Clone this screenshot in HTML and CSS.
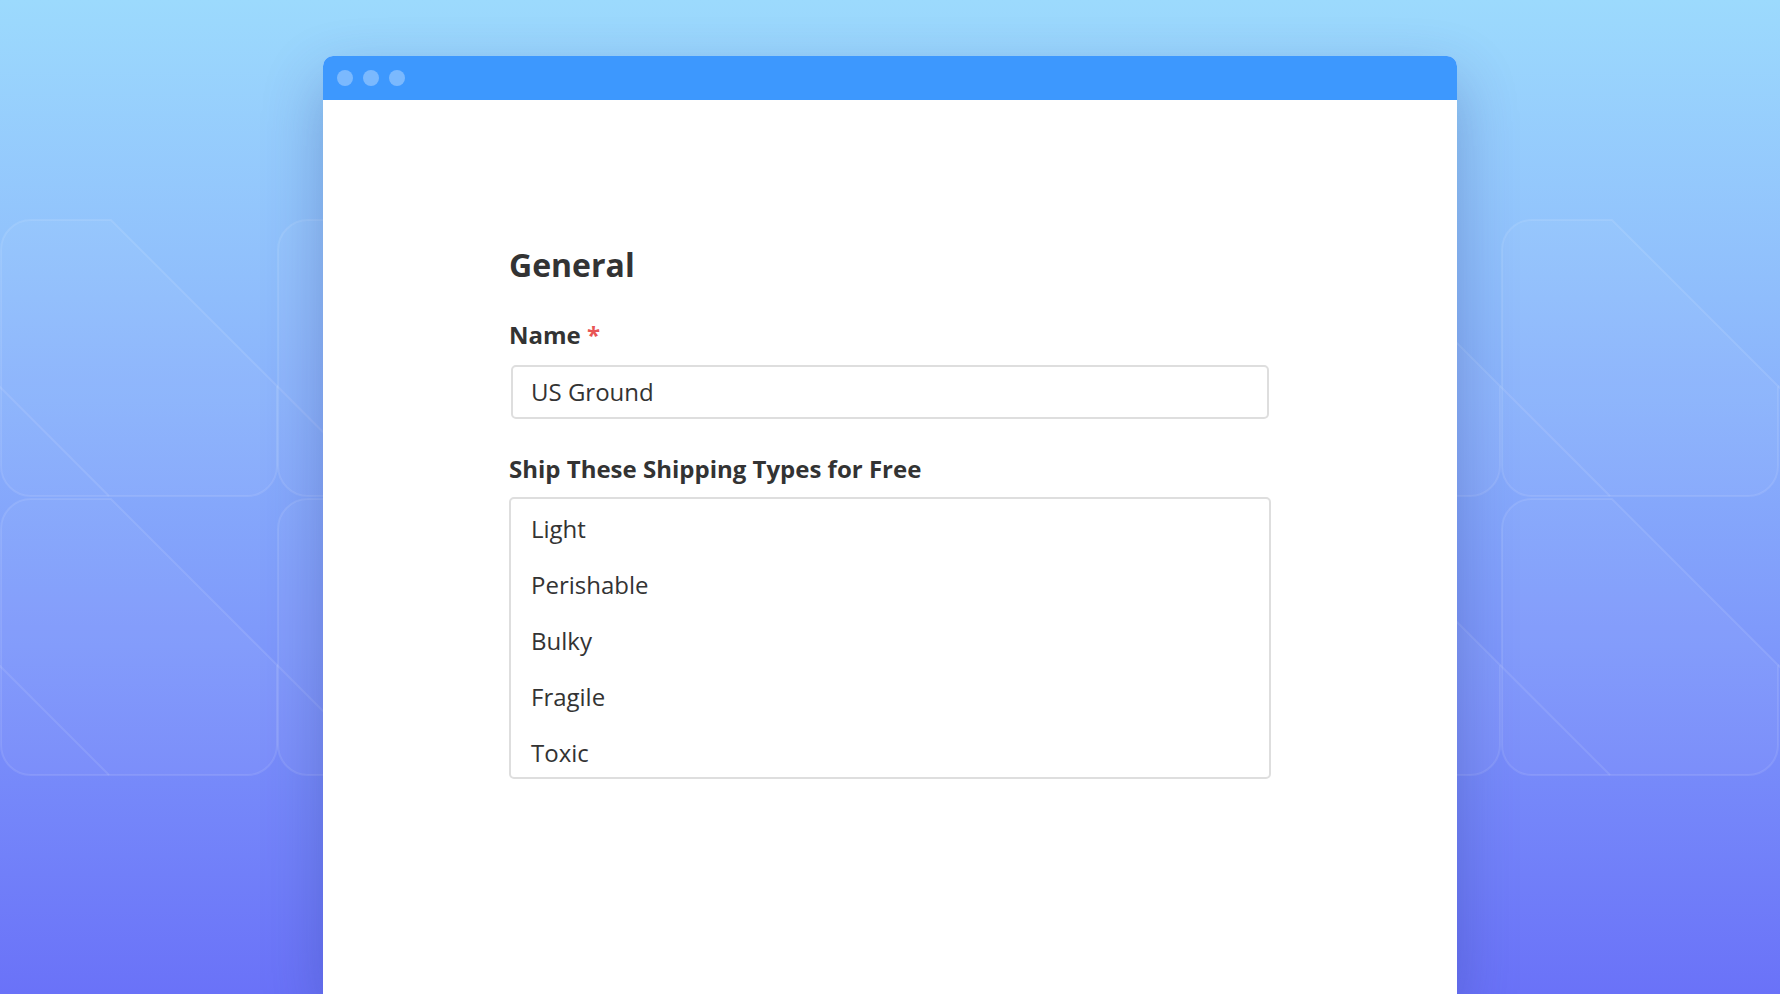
FILE: index.html
```html
<!DOCTYPE html>
<html lang="en">
<head>
<meta charset="utf-8">
<title>General</title>
<link rel="stylesheet" href="styles.css">
</head>
<body>
<svg class="bg-pattern" viewBox="0 0 1780 994" preserveAspectRatio="none" aria-hidden="true">
  <defs>
    <path id="tile" d="M30 0 H110 L276 166 V246 A30 30 0 0 1 246 276 H30 A30 30 0 0 1 0 246 V30 A30 30 0 0 1 30 0 Z"/>
    <path id="ext" d="M276 166 L386 276"/>
  </defs>
  <g class="tiles">
    <use href="#tile" x="-277" y="220"/><use href="#ext" x="-277" y="220"/>
    <use href="#tile" x="1" y="220"/><use href="#ext" x="1" y="220"/>
    <use href="#tile" x="278" y="220"/><use href="#ext" x="278" y="220"/>
    <use href="#tile" x="1224" y="220"/><use href="#ext" x="1224" y="220"/>
    <use href="#tile" x="1502" y="220"/><use href="#ext" x="1502" y="220"/>
    <use href="#tile" x="-277" y="499"/><use href="#ext" x="-277" y="499"/>
    <use href="#tile" x="1" y="499"/><use href="#ext" x="1" y="499"/>
    <use href="#tile" x="278" y="499"/><use href="#ext" x="278" y="499"/>
    <use href="#tile" x="1224" y="499"/><use href="#ext" x="1224" y="499"/>
    <use href="#tile" x="1502" y="499"/><use href="#ext" x="1502" y="499"/>
  </g>
</svg>
<div class="window">
  <div class="titlebar">
    <span class="dot"></span>
    <span class="dot"></span>
    <span class="dot"></span>
  </div>
  <div class="content">
    <form class="form">
      <h2 class="heading">General</h2>
      <div class="label">Name <span class="req">*</span></div>
      <div class="input">US Ground</div>
      <div class="label label-gap">Ship These Shipping Types for Free</div>
      <div class="listbox">
        <div class="option">Light</div>
        <div class="option">Perishable</div>
        <div class="option">Bulky</div>
        <div class="option">Fragile</div>
        <div class="option">Toxic</div>
      </div>
    </form>
  </div>
</div>
</body>
</html>
```
FILE: styles.css
```css
html, body {
  margin: 0;
  padding: 0;
  height: 100%;
}
body {
  position: relative;
  overflow: hidden;
  background: linear-gradient(180deg, #9cdafd 0%, #8fbdfc 30%, #7e98fb 65%, #6a72f8 100%);
  font-family: "Open Sans", "Liberation Sans", sans-serif;
  color: #333333;
}
.bg-pattern {
  position: absolute;
  left: 0;
  top: 0;
  width: 100%;
  height: 100%;
}
.tiles use {
  fill: rgba(255, 255, 255, 0.04);
  stroke: rgba(255, 255, 255, 0.1);
  stroke-width: 2;
}
.window {
  position: relative;
  box-sizing: border-box;
  width: 1134px;
  margin: 56px auto 0;
  height: calc(100vh - 56px);
  background: #ffffff;
  border-radius: 10px 10px 0 0;
  box-shadow: 0 24px 60px rgba(40, 60, 140, 0.32);
}
.titlebar {
  height: 44px;
  background: #3d98fe;
  border-radius: 10px 10px 0 0;
  display: flex;
  align-items: center;
  gap: 10px;
  padding-left: 14px;
}
.dot {
  width: 16px;
  height: 16px;
  border-radius: 50%;
  background: rgba(255, 255, 255, 0.32);
}
.content {
  padding-top: 145px;
}
.form {
  width: 762px;
  margin: 0 auto;
}
.heading {
  margin: 0 0 34px;
  font-size: 32px;
  line-height: 40px;
  font-weight: 700;
  color: #333333;
}
.label {
  font-size: 24px;
  line-height: 32px;
  font-weight: 700;
  color: #333333;
  margin-bottom: 14px;
}
.label-gap {
  margin-top: 34px;
  margin-bottom: 12px;
}
.req {
  color: #e85555;
}
.input {
  box-sizing: border-box;
  margin: 0 2px;
  height: 54px;
  border: 2px solid #dedede;
  border-radius: 5px;
  padding: 9px 18px;
  font-size: 24px;
  line-height: 32px;
  color: #333333;
}
.listbox {
  box-sizing: border-box;
  height: 282px;
  border: 2px solid #dedede;
  border-radius: 5px;
  padding-top: 2px;
  overflow: hidden;
}
.option {
  padding: 12px 20px;
  font-size: 24px;
  line-height: 32px;
  color: #333333;
}
```
